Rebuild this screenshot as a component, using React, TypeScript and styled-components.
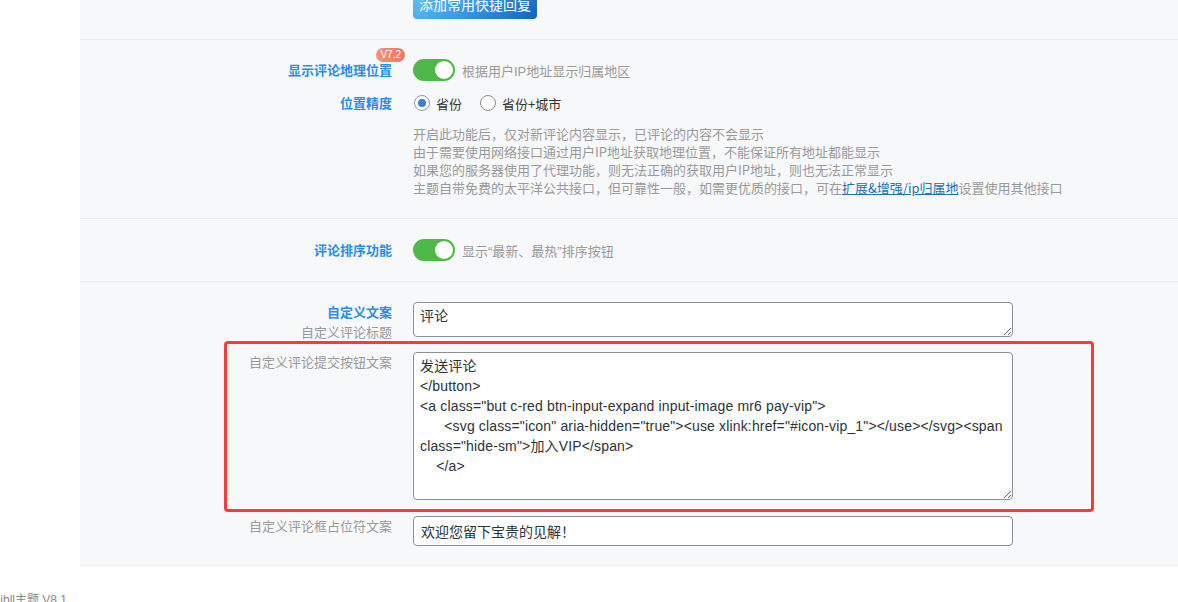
import React from "react";
import styled, { createGlobalStyle } from "styled-components";

const Global = createGlobalStyle`
  html, body { margin: 0; padding: 0; background: #fff; }
  body {
    font-family: "Liberation Sans", "Noto Sans CJK SC", sans-serif;
    font-size: 13px;
    color: #333;
    overflow: hidden;
  }
  * { box-sizing: border-box; }
`;

const Page = styled.div`
  width: 1178px;
  height: 602px;
  overflow: hidden;
`;

const Panel = styled.div`
  margin-left: 80px;
  background: #f7f8fa;
  border-bottom: 1px solid #eceef1;
`;

const Section = styled.div<{ $pt?: number; $pb?: number; $last?: boolean }>`
  padding-top: ${(p) => p.$pt ?? 20}px;
  padding-bottom: ${(p) => p.$pb ?? 20}px;
  border-bottom: ${(p) => (p.$last ? "none" : "1px solid #eaecef")};
  display: flex;
  flex-direction: column;
`;

const Row = styled.div<{ $align?: string; $mt?: number }>`
  position: relative;
  display: grid;
  grid-template-columns: 312px 600px;
  column-gap: 21px;
  align-items: ${(p) => p.$align ?? "center"};
  margin-top: ${(p) => p.$mt ?? 0}px;
`;

const MarkedRow = styled(Row)`
  &::after {
    content: "";
    position: absolute;
    top: -11px;
    bottom: -12px;
    left: 144px;
    right: 84px;
    border: 3px solid #f63b3b;
    border-radius: 4px;
    pointer-events: none;
  }
`;

const Label = styled.div<{ $blue?: boolean }>`
  position: relative;
  justify-self: end;
  text-align: right;
  font-size: 13px;
  line-height: 20px;
  color: ${(p) => (p.$blue ? "#2b8de8" : "#999")};
  font-weight: ${(p) => (p.$blue ? 700 : 400)};
  font-family: "Noto Sans CJK SC", sans-serif;
`;

const LabelLine = styled.span<{ $sub?: boolean }>`
  display: block;
  color: ${(p) => (p.$sub ? "#999" : "inherit")};
  font-weight: ${(p) => (p.$sub ? 400 : "inherit")};
`;

const Badge = styled.span`
  position: absolute;
  top: -12px;
  right: -13px;
  height: 14px;
  padding: 0 4px;
  border-radius: 7px;
  background: linear-gradient(90deg, #f9906f, #f47468);
  color: #fff;
  font-family: "Liberation Sans", sans-serif;
  font-size: 10px;
  font-weight: 400;
  line-height: 14px;
`;

const Control = styled.div`
  display: flex;
  align-items: center;
  min-width: 0;
`;

const GradientButton = styled.button`
  margin-top: -11px;
  height: 30px;
  width: 124px;
  border: none;
  border-radius: 4px;
  background: linear-gradient(135deg, #63c1f8 0%, #3a95e0 50%, #1264bd 100%);
  color: #fff;
  font-family: "Noto Sans CJK SC", sans-serif;
  font-size: 14px;
  padding: 0;
  justify-self: start;
`;

const Track = styled.span<{ $on?: boolean }>`
  position: relative;
  display: inline-block;
  width: 42px;
  height: 22px;
  border-radius: 11px;
  background: ${(p) => (p.$on ? "#4eb848" : "#ccc")};
  flex: none;
  &::after {
    content: "";
    position: absolute;
    top: 2px;
    left: ${(p) => (p.$on ? "22px" : "2px")};
    width: 18px;
    height: 18px;
    border-radius: 50%;
    background: #fff;
  }
`;

const Hint = styled.span`
  margin-left: 7px;
  color: #999;
  font-size: 13px;
  font-family: "Liberation Sans", "Noto Sans CJK SC", sans-serif;
`;

const RadioGroup = styled.div`
  display: flex;
  align-items: center;
  height: 20px;
`;

const RadioItem = styled.label`
  display: inline-flex;
  align-items: center;
  margin-right: 17px;
  color: #333;
  font-size: 13px;
  font-family: "Noto Sans CJK SC", sans-serif;
`;

const RadioDot = styled.span<{ $checked?: boolean }>`
  position: relative;
  width: 16px;
  height: 16px;
  margin: 0 6px 0 1px;
  border-radius: 50%;
  border: 1px solid ${(p) => (p.$checked ? "#999" : "#8f8f8f")};
  background: #fff;
  &::after {
    content: "";
    display: ${(p) => (p.$checked ? "block" : "none")};
    position: absolute;
    top: 3px;
    left: 3px;
    width: 8px;
    height: 8px;
    border-radius: 50%;
    background: #3582d0;
  }
`;

const Desc = styled.div`
  grid-column: 2 / 4;
  width: 700px;
  color: #999;
  font-size: 13px;
  line-height: 18px;
  font-family: "Noto Sans CJK SC", sans-serif;
  white-space: nowrap;
`;

const Link = styled.a`
  color: #2271b1;
  text-decoration: underline;
`;

const TextArea = styled.textarea<{ $h: number }>`
  display: block;
  width: 600px;
  height: ${(p) => p.$h}px;
  padding: 3px 6px;
  border: 1px solid #8c8f94;
  border-radius: 4px;
  background: #fff;
  color: #2c3338;
  font-family: "Liberation Sans", "Noto Sans CJK SC", sans-serif;
  font-size: 14px;
  line-height: 20px;
  letter-spacing: 0.15px;
  resize: vertical;
  overflow: hidden;
  outline: none;
  white-space: pre-wrap;
`;

const TextInput = styled.input`
  display: block;
  width: 600px;
  height: 30px;
  padding: 0 7px;
  border: 1px solid #8c8f94;
  border-radius: 4px;
  background: #fff;
  color: #2c3338;
  font-family: "Liberation Sans", "Noto Sans CJK SC", sans-serif;
  font-size: 14px;
  outline: none;
`;

const Footer = styled.div`
  margin-left: -7px;
  padding-top: 26px;
  color: #888;
  font-size: 12px;
  line-height: 16px;
  font-family: "Liberation Sans", "Noto Sans CJK SC", sans-serif;
`;

const submitText = `发送评论
</button>
<a class="but c-red btn-input-expand input-image mr6 pay-vip">
      <svg class="icon" aria-hidden="true"><use xlink:href="#icon-vip_1"></use></svg><span
class="hide-sm">加入VIP</span>
    </a>`;

export default function App() {
  return (
    <Page>
      <Global />
      <Panel>
        <Section $pt={0} $pb={20}>
          <Row $align="start">
            <span />
            <Control>
              <GradientButton>添加常用快捷回复</GradientButton>
            </Control>
          </Row>
        </Section>

        <Section $pt={19} $pb={21}>
          <Row>
            <Label $blue>
              显示评论地理位置
              <Badge>V7.2</Badge>
            </Label>
            <Control>
              <Track $on />
              <Hint>根据用户IP地址显示归属地区</Hint>
            </Control>
          </Row>
          <Row $mt={12}>
            <Label $blue>位置精度</Label>
            <RadioGroup>
              <RadioItem>
                <RadioDot $checked />
                省份
              </RadioItem>
              <RadioItem>
                <RadioDot />
                省份+城市
              </RadioItem>
            </RadioGroup>
          </Row>
          <Row $mt={12}>
            <span />
            <Desc>
              开启此功能后，仅对新评论内容显示，已评论的内容不会显示
              <br />
              由于需要使用网络接口通过用户IP地址获取地理位置，不能保证所有地址都能显示
              <br />
              如果您的服务器使用了代理功能，则无法正确的获取用户IP地址，则也无法正常显示
              <br />
              主题自带免费的太平洋公共接口，但可靠性一般，如需更优质的接口，可在
              <Link href="#">扩展&amp;增强/ip归属地</Link>
              设置使用其他接口
            </Desc>
          </Row>
        </Section>

        <Section $pt={20} $pb={20}>
          <Row>
            <Label $blue>评论排序功能</Label>
            <Control>
              <Track $on />
              <Hint>显示“最新、最热”排序按钮</Hint>
            </Control>
          </Row>
        </Section>

        <Section $pt={20} $pb={19} $last>
          <Row $align="start">
            <Label $blue>
              <LabelLine>自定义文案</LabelLine>
              <LabelLine $sub>自定义评论标题</LabelLine>
            </Label>
            <TextArea $h={35} defaultValue="评论" />
          </Row>
          <MarkedRow $align="start" $mt={10}>
            <Label>自定义评论提交按钮文案</Label>
            <TextArea $h={148} defaultValue={submitText} />
          </MarkedRow>
          <Row $align="start" $mt={16}>
            <Label>自定义评论框占位符文案</Label>
            <TextInput defaultValue="欢迎您留下宝贵的见解！" />
          </Row>
        </Section>
      </Panel>
      <Footer>Zibll主题 V8.1</Footer>
    </Page>
  );
}
